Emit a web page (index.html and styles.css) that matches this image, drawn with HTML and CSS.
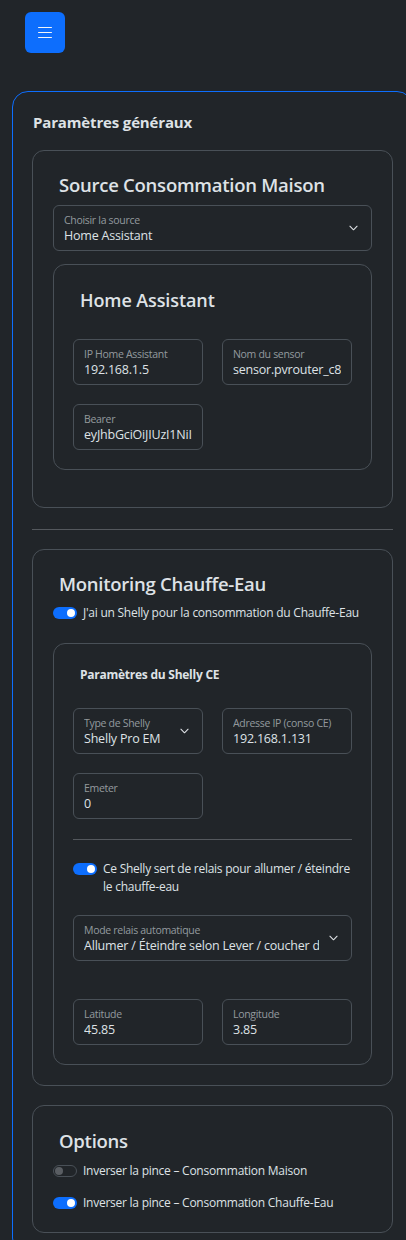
FILE: index.html
```html
<!DOCTYPE html>
<html lang="fr">
<head>
<meta charset="utf-8">
<title>Paramètres</title>
<link rel="stylesheet" href="styles.css">
</head>
<body>
<button class="menu-btn" aria-label="Menu"><span></span><span></span><span></span></button>

<div class="panel">
  <h5 class="panel-title">Paramètres généraux</h5>

  <section class="card">
    <h4 class="card-title">Source Consommation Maison</h4>
    <div class="field field-select">
      <div class="field-text">
        <span class="field-label">Choisir la source</span>
        <span class="field-value">Home Assistant</span>
      </div>
      <svg class="chevron" viewBox="0 0 10 6"><path d="M1 1l4 4 4-4" fill="none" stroke="#dee2e6" stroke-width="1.2" stroke-linecap="round" stroke-linejoin="round"/></svg>
    </div>

    <div class="subcard subcard-ha">
      <h4 class="subcard-title">Home Assistant</h4>
      <div class="grid2">
        <div class="field">
          <div class="field-text">
            <span class="field-label">IP Home Assistant</span>
            <span class="field-value">192.168.1.5</span>
          </div>
        </div>
        <div class="field">
          <div class="field-text">
            <span class="field-label">Nom du sensor</span>
            <span class="field-value">sensor.pvrouter_c8b4e1f2_consommation</span>
          </div>
        </div>
        <div class="field">
          <div class="field-text">
            <span class="field-label">Bearer</span>
            <span class="field-value">eyJhbGciOiJIUzI1NiIsInR5cCI6IkpXVCJ9</span>
          </div>
        </div>
      </div>
    </div>
  </section>

  <hr class="panel-sep">

  <section class="card">
    <h4 class="card-title">Monitoring Chauffe-Eau</h4>
    <div class="switch-row switch-row-ce">
      <span class="switch on"></span>
      <span class="switch-label">J'ai un Shelly pour la consommation du Chauffe-Eau</span>
    </div>

    <div class="subcard">
      <h5 class="subcard-subtitle">Paramètres du Shelly CE</h5>
      <div class="grid2">
        <div class="field field-select">
          <div class="field-text">
            <span class="field-label">Type de Shelly</span>
            <span class="field-value">Shelly Pro EM</span>
          </div>
          <svg class="chevron" viewBox="0 0 10 6"><path d="M1 1l4 4 4-4" fill="none" stroke="#dee2e6" stroke-width="1.2" stroke-linecap="round" stroke-linejoin="round"/></svg>
        </div>
        <div class="field">
          <div class="field-text">
            <span class="field-label">Adresse IP (conso CE)</span>
            <span class="field-value">192.168.1.131</span>
          </div>
        </div>
        <div class="field">
          <div class="field-text">
            <span class="field-label">Emeter</span>
            <span class="field-value">0</span>
          </div>
        </div>
      </div>

      <hr class="sub-sep">

      <div class="switch-row switch-row-relay">
        <span class="switch on"></span>
        <span class="switch-label">Ce Shelly sert de relais pour allumer / éteindre le chauffe-eau</span>
      </div>

      <div class="field field-select">
        <div class="field-text">
          <span class="field-label">Mode relais automatique</span>
          <span class="field-value">Allumer / Éteindre selon Lever / coucher du soleil</span>
        </div>
        <svg class="chevron" viewBox="0 0 10 6"><path d="M1 1l4 4 4-4" fill="none" stroke="#dee2e6" stroke-width="1.2" stroke-linecap="round" stroke-linejoin="round"/></svg>
      </div>

      <div class="grid2 grid-geo">
        <div class="field">
          <div class="field-text">
            <span class="field-label">Latitude</span>
            <span class="field-value">45.85</span>
          </div>
        </div>
        <div class="field">
          <div class="field-text">
            <span class="field-label">Longitude</span>
            <span class="field-value">3.85</span>
          </div>
        </div>
      </div>
    </div>
  </section>

  <section class="card card-options">
    <h4 class="card-title">Options</h4>
    <div class="switch-row switch-row-opt">
      <span class="switch off"></span>
      <span class="switch-label">Inverser la pince – Consommation Maison</span>
    </div>
    <div class="switch-row">
      <span class="switch on"></span>
      <span class="switch-label">Inverser la pince – Consommation Chauffe-Eau</span>
    </div>
  </section>
</div>
</body>
</html>
```

FILE: styles.css
```css
* {
  box-sizing: border-box;
}

html,
body {
  margin: 0;
  background: #212529;
}

body {
  font-family: "Open Sans", "Noto Sans", sans-serif;
  color: #dee2e6;
  overflow-x: hidden;
}

.menu-btn {
  display: flex;
  flex-direction: column;
  justify-content: center;
  align-items: center;
  gap: 3.5px;
  width: 40px;
  height: 41px;
  margin: 12px 0 0 25px;
  padding: 0;
  background: #0d6efd;
  border: 0;
  border-radius: 6px;
}

.menu-btn span {
  display: block;
  width: 14px;
  height: 1.5px;
  background: #f1f4f8;
  border-radius: 1px;
}

.panel {
  width: 401px;
  margin: 38px 0 0 12px;
  padding: 20px 19px;
  border: 1px solid #0d6efd;
  border-radius: 16px;
}

.panel-title {
  margin: 0 0 18px 1px;
  font-size: 15px;
  font-weight: 700;
  line-height: 20px;
  letter-spacing: -0.15px;
}

.card {
  border: 1px solid #495057;
  border-radius: 12px;
  padding: 22px 20px 20px;
}

.card-options {
  margin-top: 19px;
  padding-top: 23px;
}

.card-title {
  margin: 0 0 8px 6px;
  font-size: 18.5px;
  font-weight: 600;
  line-height: 24px;
  letter-spacing: -0.25px;
}

.card-options .card-title {
  margin-bottom: 9px;
}

.field {
  display: flex;
  align-items: center;
  height: 46px;
  padding: 0 10px;
  border: 1px solid #495057;
  border-radius: 6px;
}

.field-select {
  padding-right: 13px;
  margin-bottom: 13px;
}

.grid2 .field-select {
  margin-bottom: 0;
}

.field-text {
  display: flex;
  flex-direction: column;
  flex: 1;
  min-width: 0;
  align-self: flex-start;
  padding-top: 7px;
}

.field-label {
  font-size: 10.5px;
  line-height: 14px;
  letter-spacing: -0.3px;
  color: rgba(222, 226, 230, 0.62);
  white-space: nowrap;
  overflow: hidden;
}

.field-value {
  font-size: 12.5px;
  line-height: 17px;
  letter-spacing: -0.2px;
  white-space: nowrap;
  overflow: hidden;
}

.chevron {
  flex: none;
  width: 9px;
  height: 6px;
  margin-left: 10px;
}

.subcard {
  border: 1px solid #495057;
  border-radius: 12px;
  padding: 19px;
}

.subcard-ha {
  margin-bottom: 17px;
}

.subcard-title {
  margin: 5px 0 27px 7px;
  font-size: 18px;
  font-weight: 600;
  line-height: 23px;
  letter-spacing: -0.1px;
}

.subcard-subtitle {
  margin: 4px 0 25px 7px;
  font-size: 12px;
  font-weight: 700;
  line-height: 16px;
  letter-spacing: -0.25px;
}

.grid2 {
  display: grid;
  grid-template-columns: 130px 130px;
  column-gap: 19px;
  row-gap: 19px;
}

.grid-geo {
  margin-top: 38px;
}

.panel-sep {
  margin: 21px 0 19px;
  border: 0;
  border-top: 1px solid #54585d;
}

.sub-sep {
  margin: 20px 0;
  border: 0;
  border-top: 1px solid #54585d;
}

.switch-row {
  display: flex;
  align-items: flex-start;
  gap: 6px;
  font-size: 12px;
  line-height: 18px;
  letter-spacing: -0.25px;
}

.switch-row-ce {
  margin-bottom: 21px;
}

.switch-row-relay {
  margin-bottom: 19px;
}

.switch-row-opt {
  margin-bottom: 14px;
}

.switch {
  flex: none;
  display: flex;
  align-items: center;
  width: 24px;
  height: 12px;
  margin-top: 3px;
  padding: 0 2px;
  border-radius: 6px;
}

.switch::after {
  content: "";
  width: 8px;
  height: 8px;
  border-radius: 50%;
}

.switch.on {
  justify-content: flex-end;
  background: #0d6efd;
}

.switch.on::after {
  background: #ffffff;
}

.switch.off {
  justify-content: flex-start;
  padding: 0 1px;
  background: #212529;
  border: 1px solid #495057;
}

.switch.off::after {
  background: #5a5e63;
}
```
